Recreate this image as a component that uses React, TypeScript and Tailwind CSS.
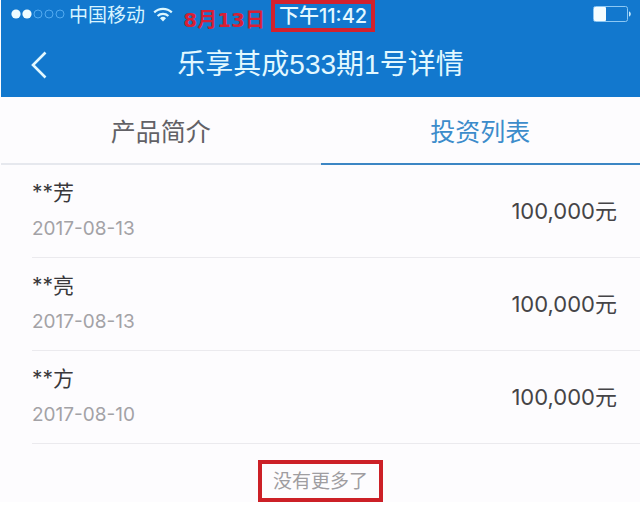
import { useState } from "react";

const investments = [
  { id: 1, name: "**芳", date: "2017-08-13", amount: "100,000元" },
  { id: 2, name: "**亮", date: "2017-08-13", amount: "100,000元" },
  { id: 3, name: "**方", date: "2017-08-10", amount: "100,000元" }
];

const tabs = ["产品简介", "投资列表"];

function SignalDots() {
  return (
    <svg width="54" height="10" viewBox="0 0 54 10" fill="none" aria-hidden="true">
      <circle cx="5" cy="5" r="4.6" fill="#effcff" />
      <circle cx="16" cy="5" r="4.6" fill="#effcff" />
      <circle cx="27" cy="5" r="4" stroke="#52aaf0" />
      <circle cx="38" cy="5" r="4" stroke="#52aaf0" />
      <circle cx="49" cy="5" r="4" stroke="#52aaf0" />
    </svg>
  );
}

function WifiIcon() {
  return (
    <svg width="20" height="15" viewBox="0 0 20 15" fill="none" stroke="#dcf7ff" strokeWidth="2.2" aria-hidden="true">
      <path d="M1.2 5.4a12.6 12.6 0 0 1 17.6 0" />
      <path d="M4.6 9a7.8 7.8 0 0 1 10.8 0" />
      <path d="M10 14.4l-3-3.2a4.4 4.4 0 0 1 6 0z" fill="#dcf7ff" stroke="none" />
    </svg>
  );
}

function BatteryIcon() {
  return (
    <svg width="39" height="16" viewBox="0 0 39 16" fill="none" aria-hidden="true">
      <rect x="0.5" y="0.5" width="34" height="15" rx="2" stroke="#8cc8f4" />
      <rect x="1" y="1" width="12" height="14" rx="1" fill="#f4fdff" />
      <path d="M36 5.5c2.4 0.6 2.4 4.4 0 5z" fill="#c4e8fc" />
    </svg>
  );
}

function StatusBar() {
  return (
    <div className="grid grid-cols-[270px_auto_1fr] items-start">
      <div className="flex items-start justify-between pr-1.5 pl-2.5">
        <div className="flex h-7 items-center">
          <SignalDots />
          <span className="ml-1 pt-1 text-[19px] leading-7 text-[#d8f4ff]">中国移动</span>
          <span className="ml-2">
            <WifiIcon />
          </span>
        </div>
        <span className="pt-1.5 font-['DejaVu_Sans','Noto_Sans_CJK_SC',sans-serif] text-[20px] leading-7 font-bold whitespace-nowrap text-[#d81f35]">
          8月13日
        </span>
      </div>
      <div className="border-4 border-[#d3212d] px-1 text-[20px] leading-6 font-medium text-[#e4f8ff]">下午11:42</div>
      <div className="flex justify-end pt-1.5 pr-2">
        <BatteryIcon />
      </div>
    </div>
  );
}

export default function App() {
  const [active, setActive] = useState(1);

  return (
    <div className="min-h-screen bg-white font-['Inter','Noto_Sans_CJK_SC',sans-serif]">
      <div className="bg-[#fdfcfe] pl-px">
        <header className="bg-[#1278ce]">
          <StatusBar />
          {/* Title row */}
          <div className="grid h-[65px] grid-cols-[1fr_auto_1fr] items-center pb-1 -mb-0.5">
            <button type="button" aria-label="返回" className="ml-[29px] w-5">
              <svg width="18" height="28" viewBox="0 0 18 28" fill="none" stroke="#e2f8ff" strokeWidth="2.6" aria-hidden="true">
                <path d="M15.5 1.5L3 14l12.500 12.500" />
              </svg>
            </button>
            <h1 className="font-['Liberation_Sans','Noto_Sans_CJK_SC',sans-serif] text-[28px] leading-10 text-[#e2f8ff]">
              乐享其成533期1号详情
            </h1>
          </div>
        </header>

        {/* Tabs */}
        <div role="tablist" className="grid grid-cols-2 bg-[#fdfcfe]">
          {tabs.map((tab, i) => (
            <button
              key={tab}
              type="button"
              role="tab"
              aria-selected={active === i}
              onClick={() => setActive(i)}
              className={
                active === i
                  ? "h-[68px] border-b-2 border-[#3c86c4] pt-1.5 text-[25px] text-[#3c8ccb]"
                  : "h-[68px] border-b-2 border-[#e6e8ee] pt-1.5 text-[25px] text-[#626166]"
              }
            >
              {tab}
            </button>
          ))}
        </div>

        {/* Investor list */}
        <ul className="pl-[31px]">
          {investments.map((item) => (
            <li key={item.id} className="flex h-[93px] items-center justify-between border-b border-[#ebeaee] pr-[23px]">
              <div>
                <p className="text-[21px] leading-9 text-[#39383b]">{item.name}</p>
                <p className="text-[19px] leading-9 text-[#a3a2a6]">{item.date}</p>
              </div>
              <p className="text-[22px] leading-8 text-[#454447]">{item.amount}</p>
            </li>
          ))}
        </ul>

        <div className="flex justify-center pt-4">
          <p className="border-4 border-[#cc2027] px-[11px] pt-0.5 text-[19px] leading-8 text-[#9f9da1]">没有更多了</p>
        </div>
      </div>
    </div>
  );
}
